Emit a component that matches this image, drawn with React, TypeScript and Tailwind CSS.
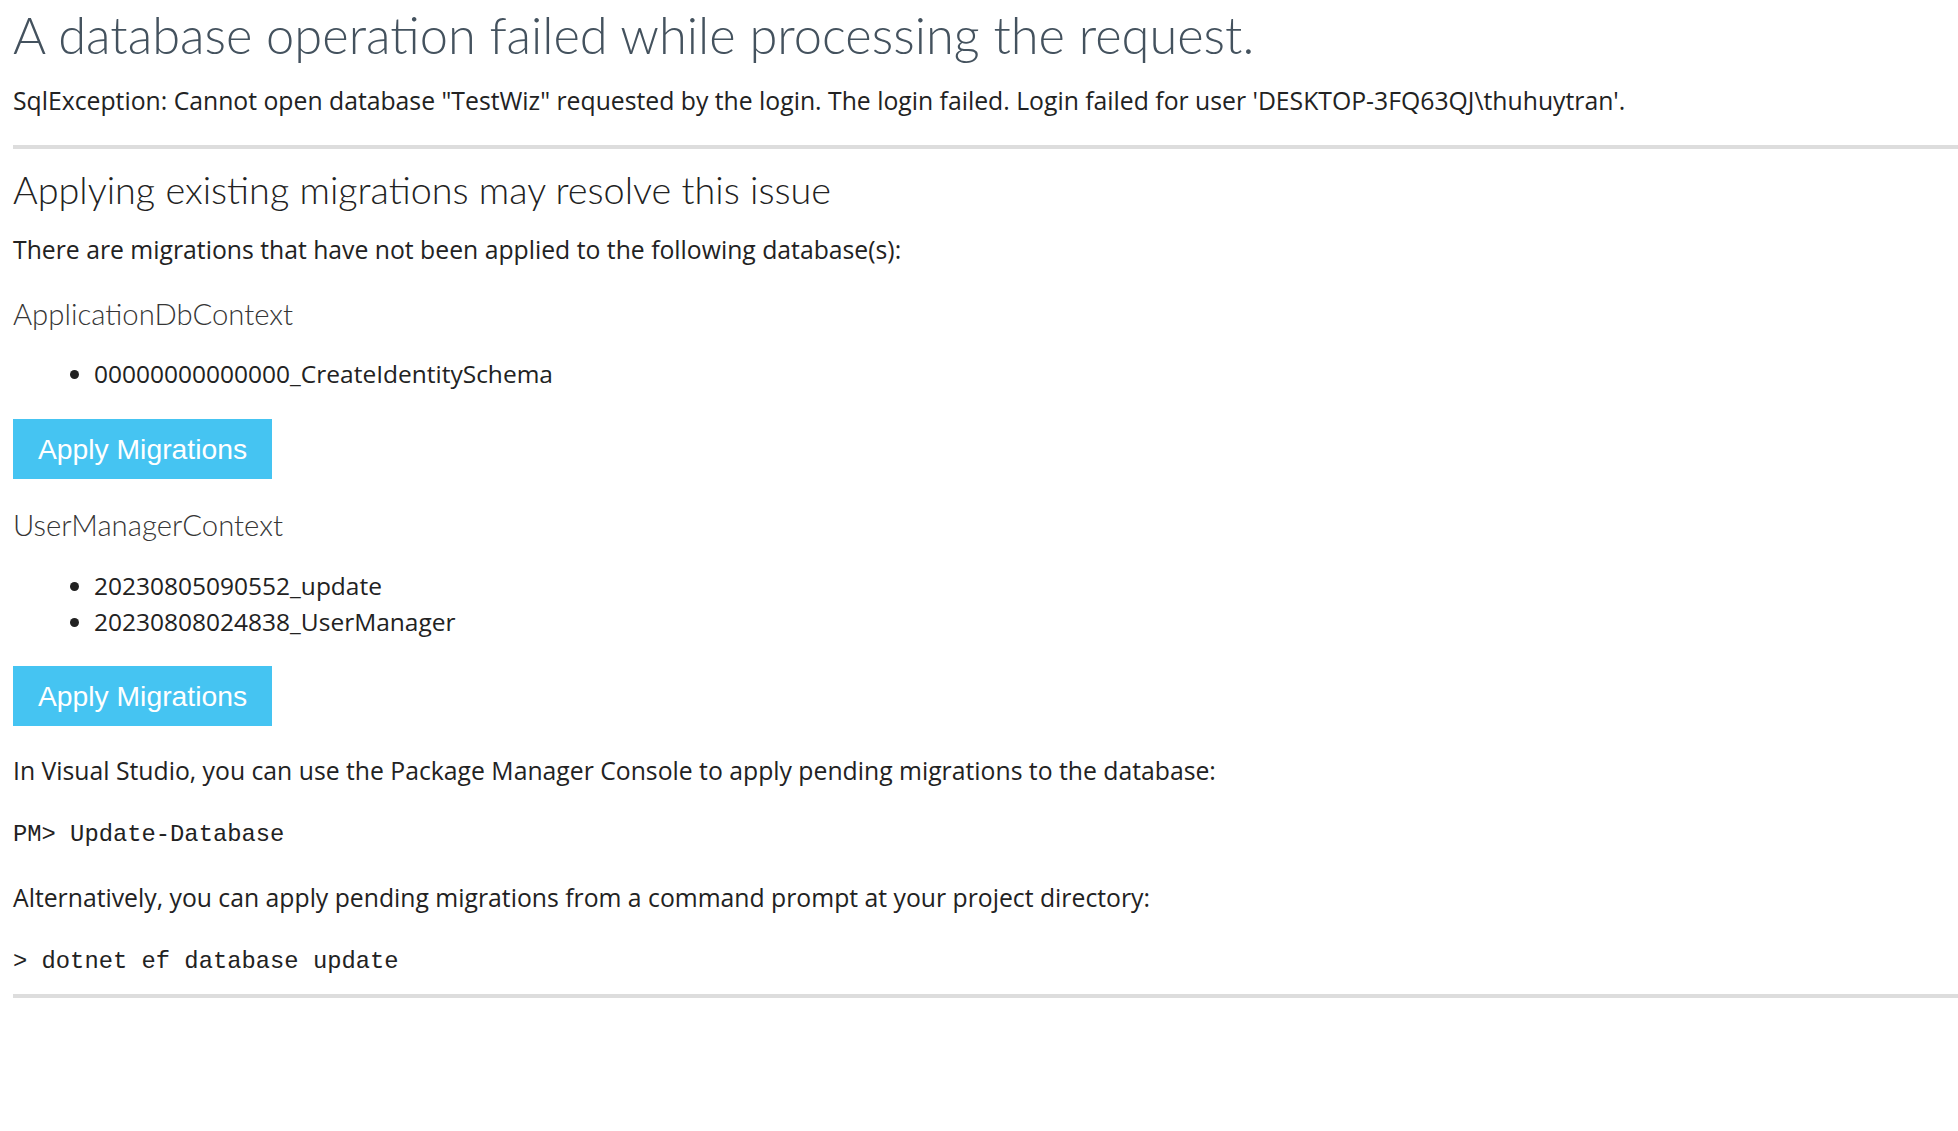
import React from "react";

const contexts = [
  {
    name: "ApplicationDbContext",
    migrations: ["00000000000000_CreateIdentitySchema"],
    gap: "mt-[26px]",
    listGap: "mt-[22px]",
    btnGap: "mt-[27px]",
  },
  {
    name: "UserManagerContext",
    migrations: ["20230805090552_update", "20230808024838_UserManager"],
    gap: "mt-[26px]",
    listGap: "mt-[23px]",
    btnGap: "mt-[26px]",
  },
];

function ApplyButton({ gap }: { gap: string }) {
  return (
    <button className={`${gap} block w-[259px] h-[60px] bg-[#45c4f2] text-white font-['Liberation_Sans',Arial,sans-serif] text-[28.3px] leading-[60px] text-center cursor-pointer`}>
      Apply Migrations
    </button>
  );
}

function MigrationGroup({
  name,
  migrations,
  gap,
  listGap,
  btnGap,
}: {
  name: string;
  migrations: string[];
  gap: string;
  listGap: string;
  btnGap: string;
}) {
  return (
    <div>
      <h3 className={`${gap} font-['Lato',sans-serif] text-[29.3px] leading-[40px] font-light text-[#363636] whitespace-nowrap`}>
        {name}
      </h3>
      <ul className={`${listGap} list-disc pl-[81px]`}>
        {migrations.map((m) => (
          <li key={m} className="text-[24.5px] leading-[36px]">
            {m}
          </li>
        ))}
      </ul>
      <ApplyButton gap={btnGap} />
    </div>
  );
}

export default function App() {
  return (
    <div className="min-h-screen bg-white pl-[13px] pt-[5px] text-[#222] font-['Open_Sans',sans-serif]">
      <h1 className="font-['Lato',sans-serif] text-[50.6px] leading-[60px] font-light text-[#44525e] whitespace-nowrap">
        A database operation failed while processing the request.
      </h1>
      <p className="mt-[18px] text-[24.75px] leading-[36px] whitespace-nowrap">
        SqlException: Cannot open database "TestWiz" requested by the login. The login failed. Login failed for user
        'DESKTOP-3FQ63QJ\thuhuytran'.
      </p>
      <hr className="mt-[26px] h-[4px] border-0 bg-[#dddddd]" />

      <h2 className="mt-[18px] font-['Lato',sans-serif] text-[37.8px] leading-[46px] font-light whitespace-nowrap">
        Applying existing migrations may resolve this issue
      </h2>
      <p className="mt-[19px] text-[24.75px] leading-[36px]">
        There are migrations that have not been applied to the following database(s):
      </p>

      {contexts.map((c) => (
        <MigrationGroup key={c.name} {...c} />
      ))}

      <p className="mt-[27px] text-[24.75px] leading-[36px]">
        In Visual Studio, you can use the Package Manager Console to apply pending migrations to the database:
      </p>
      <p className="mt-[26px] font-['DejaVu_Sans_Mono',monospace] text-[23.8px] leading-[36px]">
        <code>PM&gt; Update-Database</code>
      </p>
      <p className="mt-[27px] text-[24.75px] leading-[36px]">
        Alternatively, you can apply pending migrations from a command prompt at your project directory:
      </p>
      <p className="mt-[26px] font-['DejaVu_Sans_Mono',monospace] text-[23.8px] leading-[36px]">
        <code>&gt; dotnet ef database update</code>
      </p>
      <hr className="mt-[14px] h-[4px] border-0 bg-[#dddddd]" />
    </div>
  );
}
